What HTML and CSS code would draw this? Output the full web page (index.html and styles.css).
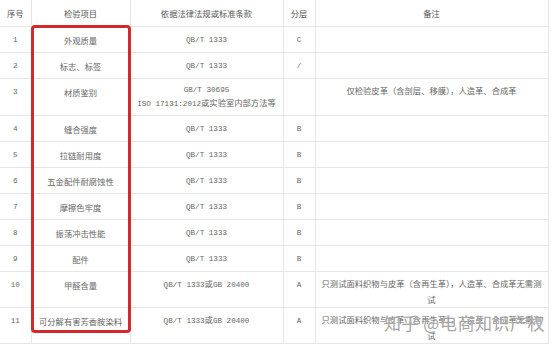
FILE: index.html
```html
<!DOCTYPE html>
<html lang="zh">
<head>
<meta charset="utf-8">
<link rel="stylesheet" href="styles.css">
</head>
<body>
<div class="wrap">
<table class="tbl">
<colgroup>
<col class="c1"><col class="c2"><col class="c3"><col class="c4"><col class="c5">
</colgroup>
<thead>
<tr class="head"><th>序号</th><th>检验项目</th><th>依据法律法规或标准条款</th><th>分层</th><th>备注</th></tr>
</thead>
<tbody>
<tr class="r"><td class="num">1</td><td>外观质量</td><td class="std">QB/T 1333</td><td class="lv">C</td><td></td></tr>
<tr class="r"><td class="num">2</td><td>标志、标签</td><td class="std">QB/T 1333</td><td class="lv">/</td><td></td></tr>
<tr class="tall"><td class="num">3</td><td>材质鉴别</td><td class="std two">GB/T 30695<br>ISO 17131:2012<span class="cj">或实验室内部方法等</span></td><td class="lv"></td><td class="note">仅检验皮革（含剖层、移膜），人造革、合成革</td></tr>
<tr class="r"><td class="num">4</td><td>缝合强度</td><td class="std">QB/T 1333</td><td class="lv">B</td><td></td></tr>
<tr class="r"><td class="num">5</td><td>拉链耐用度</td><td class="std">QB/T 1333</td><td class="lv">B</td><td></td></tr>
<tr class="r"><td class="num">6</td><td>五金配件耐腐蚀性</td><td class="std">QB/T 1333</td><td class="lv">B</td><td></td></tr>
<tr class="r"><td class="num">7</td><td>摩擦色牢度</td><td class="std">QB/T 1333</td><td class="lv">B</td><td></td></tr>
<tr class="r"><td class="num">8</td><td>振荡冲击性能</td><td class="std">QB/T 1333</td><td class="lv">B</td><td></td></tr>
<tr class="r"><td class="num">9</td><td>配件</td><td class="std">QB/T 1333</td><td class="lv">B</td><td></td></tr>
<tr class="tall2"><td class="num">10</td><td>甲醛含量</td><td class="std">QB/T 1333<span class="cj">或</span>GB 20400</td><td class="lv">A</td><td class="note">只测试面料织物与皮革（含再生革），人造革、合成革无需测试</td></tr>
<tr class="tall2 last"><td class="num">11</td><td>可分解有害芳香胺染料</td><td class="std">QB/T 1333<span class="cj">或</span>GB 20400</td><td class="lv">A</td><td class="note">只测试面料织物与皮革（含再生革），人造革、合成革无需测试</td></tr>
</tbody>
</table>
<div class="hl"></div>
<div class="mark">知乎 @电商知识产权</div>
</div>
</body>
</html>
```
FILE: styles.css
```css
html, body {
  margin: 0;
  padding: 0;
  background: #fff;
}
body {
  font-family: "Noto Sans CJK SC", "Noto Sans", sans-serif;
  color: #666;
}
.wrap {
  position: relative;
  width: 554px;
  height: 348px;
  overflow: hidden;
}
.tbl {
  border-collapse: collapse;
  table-layout: fixed;
  width: 548px;
  font-size: 8.3px;
}
.c1 { width: 31px; }
.c2 { width: 99px; }
.c3 { width: 153px; }
.c4 { width: 32px; }
.c5 { width: 233px; }
.tbl th, .tbl td {
  border: 1px solid #e6e6e6;
  padding: 4px 3px 0;
  text-align: center;
  vertical-align: top;
  line-height: 18px;
  font-weight: normal;
  white-space: nowrap;
}
.tbl th { color: #555; border-top: none; }
.tbl th:first-child, .tbl td:first-child { border-left: none; }
.tbl .note { white-space: normal; line-height: 16px; padding-top: 3px; }
.head th { height: 22px; }
.r td { height: 21px; }
.tall td { height: 32px; }
.tall2 td { height: 31px; }
.tall td.note { height: 33px; }
.tall2 td.note { height: 32px; }
.last td { border-top-style: dashed; }
.last td:first-child, .last td:nth-child(2), .last td:nth-child(3) { border-top-style: solid; }
.num, .lv, .std {
  font-family: "Liberation Mono", "Noto Sans CJK SC", monospace;
  font-size: 7.6px;
}
.two { line-height: 14px !important; }
.cj {
  font-family: "Noto Sans CJK SC", sans-serif;
  font-size: 8.3px;
  line-height: 1;
}
.hl {
  position: absolute;
  left: 31px;
  top: 25px;
  width: 94px;
  height: 302px;
  border: 3px solid #d3292b;
  border-radius: 4px;
}
.mark {
  position: absolute;
  left: 384px;
  top: 312px;
  font-size: 17px;
  line-height: 22px;
  color: rgba(140, 140, 140, 0.8);
  text-shadow: 0 0 1px #fff;
  letter-spacing: 0.5px;
  white-space: nowrap;
}
```
